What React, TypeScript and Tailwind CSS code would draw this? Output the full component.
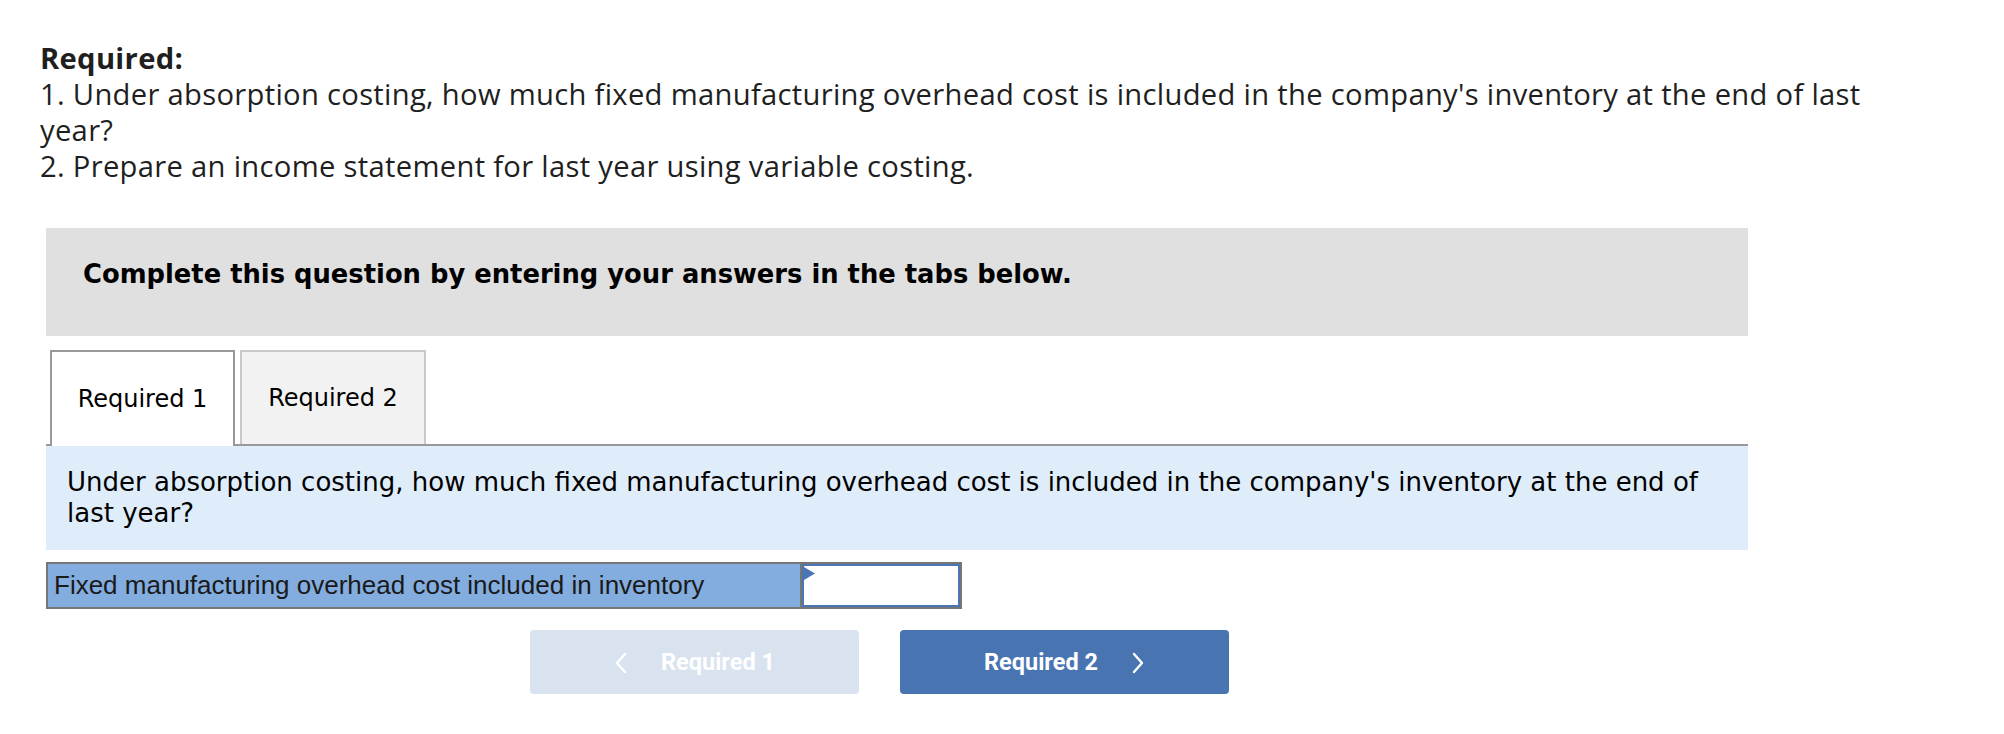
import React from "react";

const ChevronLeft = () => (
  <svg width="14" height="24" viewBox="0 0 14 24" fill="none" stroke="currentColor" strokeWidth="2.4" strokeLinecap="round" strokeLinejoin="round">
    <polyline points="11,3 3,12 11,21" />
  </svg>
);

const ChevronRight = () => (
  <svg width="14" height="24" viewBox="0 0 14 24" fill="none" stroke="currentColor" strokeWidth="2.4" strokeLinecap="round" strokeLinejoin="round">
    <polyline points="3,3 11,12 3,21" />
  </svg>
);

export default function App() {
  return (
    <div className="min-h-screen bg-white pl-[40px] pt-[40px]">
      {/* Question text */}
      <div className="w-[1880px] text-[29.2px] leading-[36px] tracking-[0.3px] text-[#1f1f1f]" style={{ fontFamily: "'Open Sans', Lato, sans-serif" }}>
        <p className="font-bold">Required:</p>
        <p>1. Under absorption costing, how much fixed manufacturing overhead cost is included in the company's inventory at the end of last year?</p>
        <p>2. Prepare an income statement for last year using variable costing.</p>
      </div>

      <div className="ml-[6px] mt-[44px] w-[1702px]" style={{ fontFamily: "Verdana, 'DejaVu Sans', sans-serif" }}>
        {/* Instructions */}
        <div className="h-[108px] bg-[#e0e0e0] pl-[37px] pt-[30px]">
          <p className="text-[25.8px] font-bold leading-[32px] text-black">
            Complete this question by entering your answers in the tabs below.
          </p>
        </div>

        {/* Tabs */}
        <div className="mt-[14px] flex border-b-2 border-[#999999] pl-[4px]">
          <div className="-mb-[2px] flex h-[96px] w-[185px] items-center justify-center border-2 border-b-0 border-[#999999] bg-white text-[24px] text-black">
            Required 1
          </div>
          <div className="ml-[5px] flex h-[94px] w-[186px] items-center justify-center border-2 border-b-0 border-[#c8c8c8] bg-[#f2f2f2] text-[24px] text-black">
            Required 2
          </div>
        </div>

        {/* Tab panel */}
        <div className="h-[104px] bg-[#dfecf9] pl-[21px] pr-[12px] pt-[21px]">
          <p className="text-[26px] leading-[31px] text-black">
            Under absorption costing, how much fixed manufacturing overhead cost is included in the company's inventory at the end of last year?
          </p>
        </div>

        {/* Answer row */}
        <div className="mt-[12px] flex h-[47px] w-[916px] border-2 border-[#767676]">
          <div className="flex flex-1 items-center bg-[#84addf] pl-[6px] text-[26px] text-[#1a1a1a]" style={{ fontFamily: "'Liberation Sans', Arial, sans-serif" }}>
            Fixed manufacturing overhead cost included in inventory
          </div>
          <div className="relative w-[160px] border-l-2 border-[#767676]">
            <input className="h-full w-full border-2 border-[#4a76b6] bg-white outline-none" />
            <svg className="absolute left-[2px] top-[3px]" width="11" height="13" viewBox="0 0 11 13">
              <polygon points="0,0 11,6.5 0,13" fill="#4a76b6" />
            </svg>
          </div>
        </div>

        {/* Navigation */}
        <div className="mt-[21px] flex gap-[41px] pl-[484px]" style={{ fontFamily: "Roboto, Inter, sans-serif" }}>
          <button className="flex h-[64px] w-[329px] items-center justify-center gap-[33px] rounded-[4px] bg-[#d9e3ef] pt-[2px] text-[23.5px] font-bold text-white">
            <ChevronLeft />
            <span>Required 1</span>
          </button>
          <button className="flex h-[64px] w-[329px] items-center justify-center gap-[33px] rounded-[4px] bg-[#4874b2] pt-[2px] text-[23.5px] font-bold text-white">
            <span>Required 2</span>
            <ChevronRight />
          </button>
        </div>
      </div>
    </div>
  );
}
